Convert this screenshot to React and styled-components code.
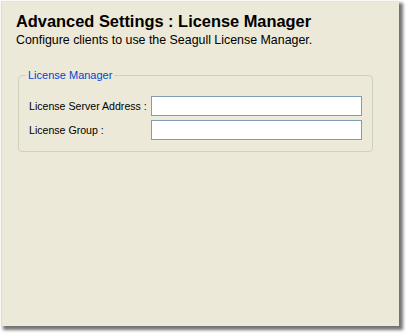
import React from "react";
import styled, { createGlobalStyle } from "styled-components";

const GlobalStyle = createGlobalStyle`
  html, body {
    margin: 0;
    padding: 0;
    background: #ffffff;
  }
  body {
    font-family: "Liberation Sans", Arial, sans-serif;
  }
`;

const Page = styled.div`
  width: 407px;
  height: 334px;
  padding: 1px 0 0 1px;
  box-sizing: border-box;
`;

const Panel = styled.div`
  width: 398px;
  height: 325px;
  background-color: #ece9d8;
  border-left: 1px solid #dcdcd4;
  border-top: 1px solid #e4e4dc;
  box-sizing: border-box;
  box-shadow: 3px 3px 3px 1px rgba(0, 0, 0, 0.55);
  padding: 9px 14px 0 14px;
`;

const Title = styled.h1`
  margin: 0;
  font-size: 16.4px;
  line-height: 20px;
  font-weight: bold;
  color: #000;
`;

const Subtitle = styled.p`
  margin: 1px 0 0 0;
  font-size: 12.4px;
  line-height: 16px;
  color: #000;
`;

const Group = styled.fieldset`
  margin: 21px 0 0 2px;
  width: 354px;
  box-sizing: border-box;
  border: 1px solid #d0d0bf;
  border-radius: 4px;
  padding: 6px 10px 11px 10px;
`;

const Legend = styled.legend`
  padding: 0 2px;
  margin-left: -3px;
  font-size: 11px;
  color: #0046d5;
`;

const Row = styled.div`
  display: grid;
  grid-template-columns: 122px 211px;
  align-items: center;
  margin-top: ${(p) => p.$gap}px;
`;

const Label = styled.label`
  font-size: 10.6px;
  color: #000;
  white-space: nowrap;
`;

const Input = styled.input`
  height: 20px;
  box-sizing: border-box;
  border: 1px solid #7f9db9;
  background: #fff;
  padding: 2px 3px;
  font-size: 11px;
  outline: none;
`;

export default function App() {
  return (
    <>
      <GlobalStyle />
      <Page>
        <Panel>
          <Title>Advanced Settings : License Manager</Title>
          <Subtitle>Configure clients to use the Seagull License Manager.</Subtitle>
          <Group>
            <Legend>License Manager</Legend>
            <Row $gap={9}>
              <Label>License Server Address :</Label>
              <Input type="text" />
            </Row>
            <Row $gap={4}>
              <Label>License Group :</Label>
              <Input type="text" />
            </Row>
          </Group>
        </Panel>
      </Page>
    </>
  );
}
